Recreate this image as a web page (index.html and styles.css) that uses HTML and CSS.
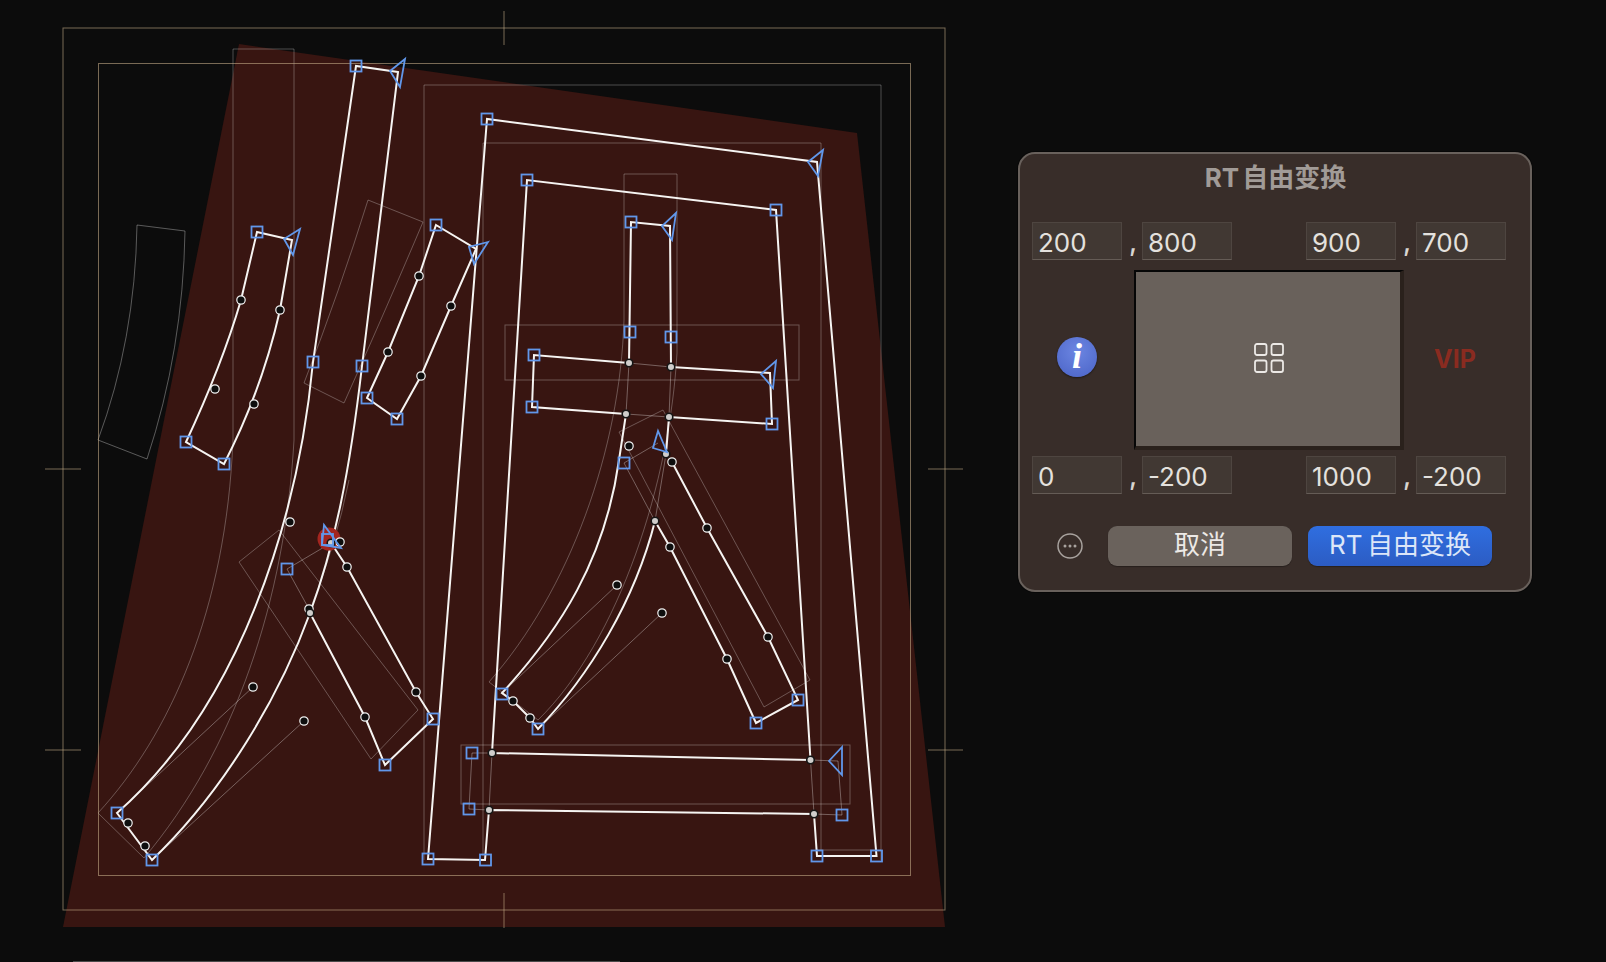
FILE: index.html
```html
<!DOCTYPE html>
<html lang="zh">
<head>
<meta charset="utf-8">
<title>RT 自由变换</title>
<link rel="stylesheet" href="styles.css">
</head>
<body>
<main class="stage">
  <svg class="canvas" viewBox="0 0 1019 962" aria-hidden="true">
    <polygon class="warp" points="239,44 857,133 945,927 63,927"/>
    <path class="ghost dim" d="M137 225L185 231Q183 350 147 459L98 440Q135 340 137 225Z"/>
    <path class="ghost" d="M233 440V49H294V440C285 600 235 750 144 858L98 813C170 735 226 610 233 440Z"/>
    <path class="ghost" d="M368 200L423 222Q390 300 344 403L304 383Q340 290 368 200Z"/>
    <path class="ghost" d="M279 530L418 710L371 759L239 562Z"/>
    <path class="ghost" d="M349 480Q336 545 310 610"/>
    <path class="ghost" d="M424 860V85H881V860"/>
    <path class="ghost" d="M483 856V143H821V850H817M821 850H881"/>
    <path class="ghost" d="M624 320V174H677V353C670 480 620 640 538 720L489 682C570 590 620 450 624 320Z"/>
    <rect class="ghost" x="505" y="325" width="294" height="55"/>
    <path class="ghost" d="M663 410L619 432L764 707L810 680Z"/>
    <rect class="ghost" x="461" y="745" width="389" height="59"/>
    <g class="art">
      <rect x="63" y="28" width="882" height="882"/>
      <rect x="98.500" y="63.500" width="812" height="812"/>
      <path d="M504 11V45M504 893V928M45 469H81M45 750H81M928 469H963M928 750H963"/>
    </g>
    <path class="handle" d="M304 721L152 860M287 569L309 609M287 569L331 543M617 585L502 693M662 613L538 729M624 463L655 521M624 463L658 443M629 363L671 367M626 414L669 417M629 363L626 414M671 367L669 417M666 454L655 521M492 753L472 753L469 809L489 810M492 753L489 810M810.500 760L838 761L842 815L814 814M810.500 760L814 814"/>
    <path class="handle" d="M253 687L117 813"/>
    <g class="line">
      <path d="M257 232L292 240L280 310Q262 390 224 464L186 442Q222 365 241 300Z"/>
      <path d="M436 225L476 249L451 306L421 376L397 419L367 398L388 352L419 276Z"/>
      <path d="M398 72L356 66L313 362C298 520 240 705 117 813L152 860C225 790 280 695 310 613C335 545 350 470 362 366Z"/>
      <path d="M331 543L347 567L416 692L433 719L385 765L365 717L310 613"/>
      <path d="M487 119L428 859L485 860L489 810L814 814L817 856H876.500L817 162Z"/>
      <path d="M527 180L492 753L810.500 760L776 210Z"/>
      <path d="M629 363L631 222L670 226L671 367"/>
      <path d="M629 363L534 355L532 407L626 414M671 367L770 373L772 424L669 417"/>
      <path d="M626 414L619 460C605 560 560 630 502 693L513 701L530 718L538 729C590 675 635 600 655 521"/>
      <path d="M669 417L666 454M672 462L707 528L768 637L798 700L756 723L727 659L670 547L655 521"/>
    </g>
    <circle class="halo" cx="329" cy="539" r="11.500"/>
    <g class="pts">
      <circle cx="241" cy="300"/><circle cx="215" cy="389"/><circle cx="254" cy="404"/><circle cx="280" cy="310"/>
      <circle cx="419" cy="276"/><circle cx="388" cy="352"/><circle cx="421" cy="376"/><circle cx="451" cy="306"/>
      <circle cx="290" cy="522"/><circle cx="340" cy="542"/><circle cx="347" cy="567"/><circle cx="309" cy="609"/>
      <circle cx="416" cy="692"/><circle cx="365" cy="717"/><circle cx="253" cy="687"/><circle cx="304" cy="721"/>
      <circle cx="128" cy="823"/><circle cx="145" cy="846"/>
      <circle cx="629" cy="446"/><circle cx="672" cy="462"/><circle cx="707" cy="528"/><circle cx="670" cy="547"/>
      <circle cx="768" cy="637"/><circle cx="727" cy="659"/><circle cx="617" cy="585"/><circle cx="662" cy="613"/>
      <circle cx="513" cy="701"/><circle cx="530" cy="718"/>
    </g>
    <g class="nodes">
      <circle cx="331" cy="543"/><circle cx="310" cy="613"/><circle cx="629" cy="363"/><circle cx="671" cy="367"/>
      <circle cx="626" cy="414"/><circle cx="669" cy="417"/><circle cx="666" cy="454"/><circle cx="655" cy="521"/>
      <circle cx="492" cy="753"/><circle cx="810.500" cy="760"/><circle cx="489" cy="810"/><circle cx="814" cy="814"/>
    </g>
    <g class="blue">
      <rect x="350.500" y="60.500" width="11" height="11"/><rect x="307.500" y="356.500" width="11" height="11"/><rect x="356.500" y="360.500" width="11" height="11"/>
      <rect x="251.500" y="226.500" width="11" height="11"/><rect x="180.500" y="436.500" width="11" height="11"/><rect x="218.500" y="458.500" width="11" height="11"/>
      <rect x="430.500" y="219.500" width="11" height="11"/><rect x="361.500" y="392.500" width="11" height="11"/><rect x="391.500" y="413.500" width="11" height="11"/>
      <rect x="322" y="534" width="11" height="11"/><rect x="281.500" y="563.500" width="11" height="11"/><rect x="427.500" y="713.500" width="11" height="11"/><rect x="379.500" y="759.500" width="11" height="11"/>
      <rect x="111.500" y="807.500" width="11" height="11"/><rect x="146.500" y="854.500" width="11" height="11"/>
      <rect x="481.500" y="113.500" width="11" height="11"/><rect x="521.500" y="174.500" width="11" height="11"/><rect x="770.500" y="204.500" width="11" height="11"/>
      <rect x="625.500" y="216.500" width="11" height="11"/><rect x="624.500" y="326.500" width="11" height="11"/><rect x="665.500" y="331.500" width="11" height="11"/>
      <rect x="528.500" y="349.500" width="11" height="11"/><rect x="526.500" y="401.500" width="11" height="11"/><rect x="766.500" y="418.500" width="11" height="11"/>
      <rect x="618.500" y="457.500" width="11" height="11"/><rect x="496.500" y="688.500" width="11" height="11"/><rect x="532.500" y="723.500" width="11" height="11"/>
      <rect x="750.500" y="717.500" width="11" height="11"/><rect x="792.500" y="694.500" width="11" height="11"/>
      <rect x="466.500" y="747.500" width="11" height="11"/><rect x="463.500" y="803.500" width="11" height="11"/><rect x="836.500" y="809.500" width="11" height="11"/>
      <rect x="422.500" y="853.500" width="11" height="11"/><rect x="480" y="854.500" width="11" height="11"/><rect x="811.500" y="850.500" width="11" height="11"/><rect x="871" y="850.500" width="11" height="11"/>
      <polygon points="405,59 390,71 400,87"/>
      <polygon points="300,229 284,239 293,255"/>
      <polygon points="488,242 469,247 474,264"/>
      <polygon points="324,525 322,545 341,548"/>
      <polygon points="823,150 808,162 818,176"/>
      <polygon points="676,213 662,226 672,240"/>
      <polygon points="776,361 761,374 773,388"/>
      <polygon points="658,431 653,448 667,452"/>
      <polygon points="842,747 829,761 842,775"/>
    </g>
    <path class="sliver" d="M73 961.500H620"/>
  </svg>

  <section class="panel">
    <h1 class="title"><span class="latin">RT</span> 自由变换</h1>

    <div class="coords coords-top">
      <div class="pair"><span class="field">200</span><span class="comma">,</span><span class="field">800</span></div>
      <div class="pair"><span class="field">900</span><span class="comma">,</span><span class="field">700</span></div>
    </div>

    <div class="middle">
      <div class="side side-left"><span class="info">i</span></div>
      <div class="preview">
        <svg class="grid-icon" viewBox="0 0 30 30" aria-hidden="true">
          <rect x="1" y="1" width="11.500" height="11" rx="2"/><rect x="17.500" y="1" width="11.500" height="11" rx="2"/>
          <rect x="1" y="17.500" width="11.500" height="11.500" rx="2"/><rect x="17.500" y="17.500" width="11.500" height="11.500" rx="2"/>
        </svg>
      </div>
      <div class="side side-right"><span class="vip">VIP</span></div>
    </div>

    <div class="coords coords-bottom">
      <div class="pair"><span class="field">0</span><span class="comma">,</span><span class="field">-200</span></div>
      <div class="pair"><span class="field">1000</span><span class="comma">,</span><span class="field">-200</span></div>
    </div>

    <div class="actions">
      <svg class="more" viewBox="0 0 26 26" aria-hidden="true">
        <circle class="more-ring" cx="13" cy="13" r="12"/>
        <circle class="more-dot" cx="8" cy="13" r="1.500"/><circle class="more-dot" cx="13" cy="13" r="1.500"/><circle class="more-dot" cx="18" cy="13" r="1.500"/>
      </svg>
      <button class="btn btn-cancel">取消</button>
      <button class="btn btn-primary"><span class="latin">RT</span> 自由变换</button>
    </div>
  </section>
</main>
</body>
</html>
```

FILE: styles.css
```css
* { box-sizing: border-box; }

html, body {
  margin: 0;
  height: 100%;
  background: #0c0c0c;
  overflow: hidden;
}

body {
  font-family: Inter, "Noto Sans CJK SC", sans-serif;
}

.stage {
  display: flex;
  align-items: flex-start;
  width: 1606px;
  height: 962px;
}

.canvas {
  display: block;
  flex: none;
  width: 1019px;
  height: 962px;
}

.canvas * { fill: none; }

.canvas .warp { fill: #381511; }

.ghost {
  stroke: rgba(255, 255, 255, 0.27);
  stroke-width: 1;
}

.dim { stroke: rgba(255, 255, 255, 0.32); }

.art * {
  stroke: rgba(195, 170, 135, 0.6);
  stroke-width: 1;
}

.handle {
  stroke: rgba(255, 255, 255, 0.32);
  stroke-width: 1;
}

.line * {
  stroke: #f6f4f2;
  stroke-width: 2;
  stroke-linejoin: miter;
}

.canvas .halo { fill: #a3251f; }

.canvas .pts circle {
  r: 4.200px;
  fill: #0e0e0e;
  stroke: #f2f2f2;
  stroke-width: 1.200;
}

.canvas .nodes circle {
  r: 3.800px;
  fill: #cfcdcb;
  stroke: #151515;
  stroke-width: 1.600;
}

.blue * {
  stroke: #6197ea;
  stroke-width: 1.800;
}

.sliver {
  stroke: #4a4a4a;
  stroke-width: 1;
}

.panel {
  flex: none;
  display: flex;
  flex-direction: column;
  width: 514px;
  height: 440px;
  margin: 152px 0 0 -1px;
  padding: 0 24px 0 12px;
  background: #382d29;
  border: 2px solid #69615c;
  border-radius: 17px;
  box-shadow: 0 0 0 1px rgba(0, 0, 0, 0.4);
}

.title {
  margin: 0;
  height: 68px;
  padding: 8px 0 0 13px;
  font-size: 26px;
  line-height: 32px;
  font-weight: 700;
  text-align: center;
  color: #a19b97;
}

.latin { margin-right: -3px; }

.coords {
  display: flex;
  justify-content: space-between;
}

.pair {
  display: flex;
  align-items: flex-start;
}

.field {
  display: block;
  width: 90px;
  height: 38px;
  padding: 0 5px;
  font-size: 26px;
  line-height: 39px;
  color: #e4e1de;
  background: #413833;
  border: 1px solid #4e4540;
  border-bottom-color: #655c56;
}

.comma {
  width: 20px;
  height: 38px;
  padding-left: 2px;
  font-size: 27px;
  font-weight: 500;
  line-height: 39px;
  text-align: center;
  color: #d8d4d0;
}

.middle {
  display: flex;
  align-items: stretch;
  height: 180px;
  margin: 10px 0 6px;
}

.side {
  flex: 1;
  display: flex;
  align-items: center;
  justify-content: center;
}

.side-left {
  flex: none;
  width: 102px;
  padding: 0 12px 6px 0;
}

.side-right { padding-bottom: 3px; }

.info {
  display: block;
  width: 40px;
  height: 40px;
  border-radius: 50%;
  background: radial-gradient(circle at 50% 35%, #6c86e2, #4a63c6);
  box-shadow: 0 1px 2px rgba(0, 0, 0, 0.45);
  font-family: "Liberation Serif", serif;
  font-style: italic;
  font-weight: 700;
  font-size: 36px;
  line-height: 39px;
  text-align: center;
  color: #fff;
}

.preview {
  flex: none;
  display: flex;
  align-items: center;
  justify-content: center;
  width: 270px;
  height: 180px;
  background: #69615b;
  border-style: solid;
  border-width: 2px 4px 4px 2px;
  border-color: #060606 #2a211c #2a211c #060606;
}

.grid-icon {
  width: 30px;
  height: 30px;
  margin: 0 0 2px 2px;
}

.grid-icon rect {
  fill: none;
  stroke: #ece9e6;
  stroke-width: 1.800;
}

.vip {
  font-size: 25px;
  font-weight: 700;
  color: #8a2b20;
}

.actions {
  display: flex;
  align-items: center;
  margin-top: 32px;
}

.more {
  flex: none;
  width: 26px;
  height: 26px;
  margin: 0 25px 0 25px;
}

.more-ring {
  fill: none;
  stroke: #a8a29e;
  stroke-width: 1.500;
}

.more-dot { fill: #a8a29e; }

.btn {
  flex: none;
  width: 184px;
  height: 40px;
  padding: 0 0 2px;
  border: 0;
  border-radius: 9px;
  font-family: Inter, "Noto Sans CJK SC", sans-serif;
  font-size: 26px;
  line-height: 38px;
  color: #ece9e6;
  box-shadow: 0 1px 1px rgba(0, 0, 0, 0.3);
}

.btn-cancel {
  margin-right: 16px;
  background: #6a625c;
}

.btn-primary {
  background: linear-gradient(#2f6ee0, #2c5cc3);
  color: #dce6f8;
}
```
